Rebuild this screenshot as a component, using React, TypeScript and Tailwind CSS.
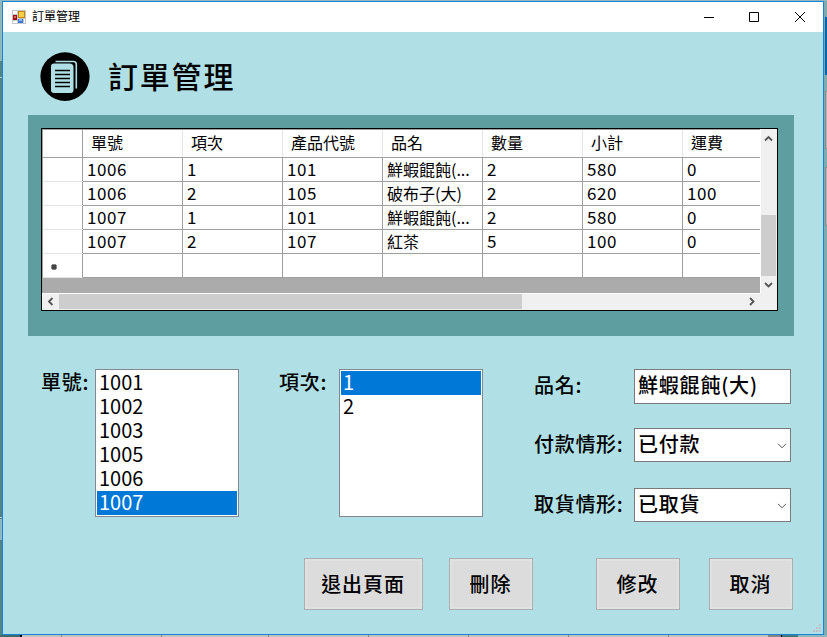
import type { ReactNode } from "react";

const columns = ["單號", "項次", "產品代號", "品名", "數量", "小計", "運費"];
const rows = [
  ["1006", "1", "101", "鮮蝦餛飩(...", "2", "580", "0"],
  ["1006", "2", "105", "破布子(大)", "2", "620", "100"],
  ["1007", "1", "101", "鮮蝦餛飩(...", "2", "580", "0"],
  ["1007", "2", "107", "紅茶", "5", "100", "0"],
  ["", "", "", "", "", "", ""],
];

const GRID = "grid grid-cols-[40px_repeat(6,100px)_77px]";

function Arrow({ d }: { d: string }) {
  return (
    <svg width="9" height="9" viewBox="0 0 9 9" fill="none" stroke="#555" strokeWidth="1.800">
      <path d={d} />
    </svg>
  );
}

function TitleBar() {
  return (
    <header className="flex h-[30px] shrink-0 items-center bg-white">
      <svg className="ml-[9px]" width="14" height="14" viewBox="0 0 14 14">
        <path d="M0 0h14v14H0z" fill="#c5c5cb" />
        <path d="M1 1h4v3H1zM1 11h4v2H1z" fill="#fff" />
        <path d="M6 1h7v7H6z" fill="#c38a00" />
        <path d="M7 2h5v5H7z" fill="#fdd04a" />
        <path d="M1 5h4v5H1z" fill="#a30d0d" />
        <path d="M2 6h2v2H2z" fill="#e66a5c" />
        <path d="M6 9h5v4H6z" fill="#3c78d8" />
        <path d="M7 9h3v2H7z" fill="#85b5f5" />
        <path d="M12 9h1v4h-1z" fill="#fff" />
      </svg>
      <h1 className="mb-[2px] ml-[6px] text-xs leading-none text-black">訂單管理</h1>
      <div className="ml-auto flex pr-4">
        <svg width="104" height="12" viewBox="0 0 104 12" fill="none" stroke="#000">
          <path d="M1 6.500h10M46.500 1.500h9v9h-9zM92 1l10 10M102 1L92 11" />
        </svg>
      </div>
    </header>
  );
}

function DataGrid() {
  return (
    <div className="flex h-[183px] w-[737px] flex-col border border-black bg-[#f0f0f0]">
      <div className="flex h-[164px]">
        <div className="flex w-[718px] flex-col border-t border-l border-[#a0a0a0] bg-[#ababab]">
          <div className={GRID + " h-[28px] border-b border-[#a0a0a0] bg-white"}>
            <div className="border-r border-[#a0a0a0]" />
            {columns.map((name, i) => (
              <div
                key={name}
                className={
                  "pl-2 text-[16px] leading-[25px] " + (i < 6 ? "border-r border-[#e5e5e5]" : "")
                }
              >
                {name}
              </div>
            ))}
          </div>
          {rows.map((row, r) => (
            <div key={r} className={GRID + " h-6 bg-white"}>
              <div className="flex items-center border-r border-b border-r-[#a0a0a0] border-b-[#e5e5e5] pl-2">
                {r === 4 && (
                  <svg className="mt-[3px]" width="6" height="6" viewBox="0 0 6 6">
                    <path d="M1 0h4v1h1v4H5v1H1V5H0V1h1z" fill="#888" />
                    <path d="M1 1h4v4H1z" fill="#444" />
                  </svg>
                )}
              </div>
              {row.map((value, c) => (
                <div
                  key={c}
                  className={
                    "whitespace-nowrap border-b border-[#a0a0a0] pl-1 " +
                    (c < 6 ? "border-r " : "") +
                    (c === 3
                      ? "text-[16px] leading-[23px]"
                      : "text-[17px] leading-[22px] tracking-[0.55px]")
                  }
                >
                  {value}
                </div>
              ))}
            </div>
          ))}
        </div>
        <div className="flex w-[17px] flex-col border-l border-white">
          <div className="flex h-[17px] w-[15px] items-center justify-center pt-px">
            <Arrow d="M1 6.500L4.500 3L8 6.500" />
          </div>
          <div className="mt-[69px] h-[61px] w-[15px] bg-[#cdcdcd]" />
          <div className="flex h-[17px] w-[15px] items-center justify-center">
            <Arrow d="M1 3L4.500 6.500L8 3" />
          </div>
        </div>
      </div>
      <div className="flex h-[17px] w-[718px] border-t border-white">
        <div className="flex w-[17px] items-center justify-center pr-px pb-px">
          <Arrow d="M6.500 1L3 4.500L6.500 8" />
        </div>
        <div className="h-[15px] w-[463px] bg-[#cdcdcd]" />
        <div className="ml-auto flex w-[17px] items-center justify-center pb-px">
          <Arrow d="M3 1L6.500 4.500L3 8" />
        </div>
      </div>
    </div>
  );
}

function ListBox({ items, selected }: { items: string[]; selected: string }) {
  return (
    <ul className="h-[148px] w-36 border border-[#828790] bg-white p-px text-[20px]">
      {items.map((item) => (
        <li
          key={item}
          className={
            "h-6 pl-[2px] leading-[22px] " +
            (item === selected ? "bg-[#0078d7] text-white" : "text-black")
          }
        >
          {item}
        </li>
      ))}
    </ul>
  );
}

function Label({ children }: { children: ReactNode }) {
  return (
    <span className="-ml-px text-[20px] leading-[26px] font-medium tracking-[0.7px]">
      {children}
    </span>
  );
}

function Field({ value, select, size }: { value: string; select?: boolean; size: string }) {
  return (
    <div
      className={
        "flex w-[157px] items-start justify-between border border-[#7a7a7a] bg-white pr-[3px] pl-[3px] text-[20px] leading-[30px] font-medium tracking-[0.8px] " +
        size
      }
    >
      <span className="whitespace-nowrap">{value}</span>
      {select && (
        <svg width="10" height="6" viewBox="0 0 10 6" fill="none" stroke="#555" className="mt-[14px]">
          <path d="M1 .8l4 4 4-4" />
        </svg>
      )}
    </div>
  );
}

function Button({ children, size }: { children: ReactNode; size: string }) {
  return (
    <button
      className={
        "h-[52px] border border-[#adadad] bg-[#dcdcdc] pr-px text-[20px] font-medium tracking-[0.9px] shadow-[inset_0_0_0_2px_#e1e1e1] " +
        size
      }
    >
      {children}
    </button>
  );
}

export default function App() {
  return (
    <div className="flex h-[637px] w-[827px] flex-col overflow-hidden bg-[#8fb8bc] font-['Noto_Sans_CJK_TC',sans-serif] text-black">
      <div className="h-px shrink-0" />
      <div className="flex h-[634px] shrink-0">
        <div className="flex w-[2px] flex-col bg-[#4f8587]">
          <div className="h-[60px] bg-[#8fb8bc]" />
          <div className="mt-4 h-px bg-[#b5cfd1]" />
          <div className="mt-[439px] h-px bg-[#b5cfd1]" />
          <div className="mt-px h-[21px] bg-[#8fb8c4]" />
        </div>
        <div className="flex w-[822px] flex-col border border-[#1883d7] bg-[#b0e0e6]">
          <TitleBar />
          <main className="flex flex-col">
            <div className="flex h-[83px] items-start pt-5 pl-[37px]">
              <svg width="50" height="50" viewBox="0 0 50 50">
                <ellipse cx="25" cy="24.600" rx="24.600" ry="24.300" />
                <path
                  d="M14 11.500h15.500q4 0 4 4V38q0 3-3 3H14q-3 0-3-3V14.500q0-3 3-3z"
                  fill="#b0e0e6"
                />
                <path
                  d="M15.500 9.500h18q2.800 0 2.800 2.800V36.500"
                  fill="none"
                  stroke="#b0e0e6"
                  strokeWidth="1.600"
                />
                <path
                  d="M15 18.500h15M15 22.500h15M15 26.500h15M15 30.500h15M15 34.500h15"
                  stroke="#000"
                  strokeWidth="1.500"
                />
              </svg>
              <h2 className="ml-[18px] text-[30px] leading-[47px] font-medium tracking-[1.800px]">
                訂單管理
              </h2>
            </div>
            <section className="ml-[25px] h-[221px] w-[766px] bg-[#5f9ea0] pt-[13px] pl-[13px]">
              <DataGrid />
            </section>
            <section className="mt-[33px] flex h-[154px] items-start pl-[39px]">
              <div className="flex w-[238px] items-start">
                <div className="w-[53px]">
                  <Label>單號:</Label>
                </div>
                <ListBox items={["1001", "1002", "1003", "1005", "1006", "1007"]} selected="1007" />
              </div>
              <div className="flex w-[255px] items-start">
                <div className="w-[59px]">
                  <Label>項次:</Label>
                </div>
                <ListBox items={["1", "2"]} selected="1" />
              </div>
              <div className="flex flex-col">
                <div className="flex h-[59px] items-start">
                  <div className="w-[99px] pt-[3px]">
                    <Label>品名:</Label>
                  </div>
                  <Field value="鮮蝦餛飩(大)" size="h-[35px]" />
                </div>
                <div className="flex h-[60px] items-start">
                  <div className="w-[99px] pt-[3px]">
                    <Label>付款情形:</Label>
                  </div>
                  <Field value="已付款" select size="h-[34px]" />
                </div>
                <div className="flex h-[34px] items-start">
                  <div className="w-[99px] pt-[3px]">
                    <Label>取貨情形:</Label>
                  </div>
                  <Field value="已取貨" select size="h-[34px]" />
                </div>
              </div>
            </section>
            <section className="mt-[35px] flex pl-[301px]">
              <Button size="w-[119px]">退出頁面</Button>
              <Button size="ml-[26px] w-[84px]">刪除</Button>
              <Button size="ml-[63px] w-[84px]">修改</Button>
              <Button size="ml-[29px] w-[84px]">取消</Button>
            </section>
            <svg className="mt-[14px] ml-[810px]" width="8" height="8" viewBox="0 0 8 8">
              <path
                d="M6 0h2v2H6zM3 3h2v2H3zM6 3h2v2H6zM0 6h2v2H0zM3 6h2v2H3zM6 6h2v2H6z"
                fill="#bfbfc4"
              />
            </svg>
          </main>
        </div>
        <div className="flex w-[3px] flex-col bg-[#7fabae] pl-px">
          <div className="mt-4 h-[58px] bg-[#0063b1]" />
          <div className="mt-4 h-[58px] border border-r-0 border-[#8c8c8c] bg-[#b4b4b4]" />
          <div className="mt-[18px] h-[59px] border border-r-0 border-[#8c8c8c] bg-[#b4b4b4]" />
        </div>
      </div>
      <div className="flex h-[2px] shrink-0">
        <div className="w-[20px] bg-[#3f6a6c]" />
        <div className="w-[2px] bg-black" />
        <div className="w-[40px] border-r border-[#858585] bg-[#c3c3c3]" />
        <div className="w-[100px] border-r border-[#858585] bg-[#c3c3c3]" />
        <div className="w-[107px] border-r border-[#858585] bg-[#c3c3c3]" />
        <div className="w-[100px] border-r border-[#858585] bg-[#c3c3c3]" />
        <div className="w-[100px] border-r border-[#858585] bg-[#c3c3c3]" />
        <div className="w-[100px] border-r border-[#858585] bg-[#c3c3c3]" />
        <div className="w-[100px] border-r border-[#858585] bg-[#c3c3c3]" />
        <div className="w-[99px] bg-[#c3c3c3]" />
        <div className="w-[13px] bg-[#858585]" />
        <div className="w-px bg-black" />
        <div className="w-[16px] bg-[#42787a]" />
      </div>
    </div>
  );
}
